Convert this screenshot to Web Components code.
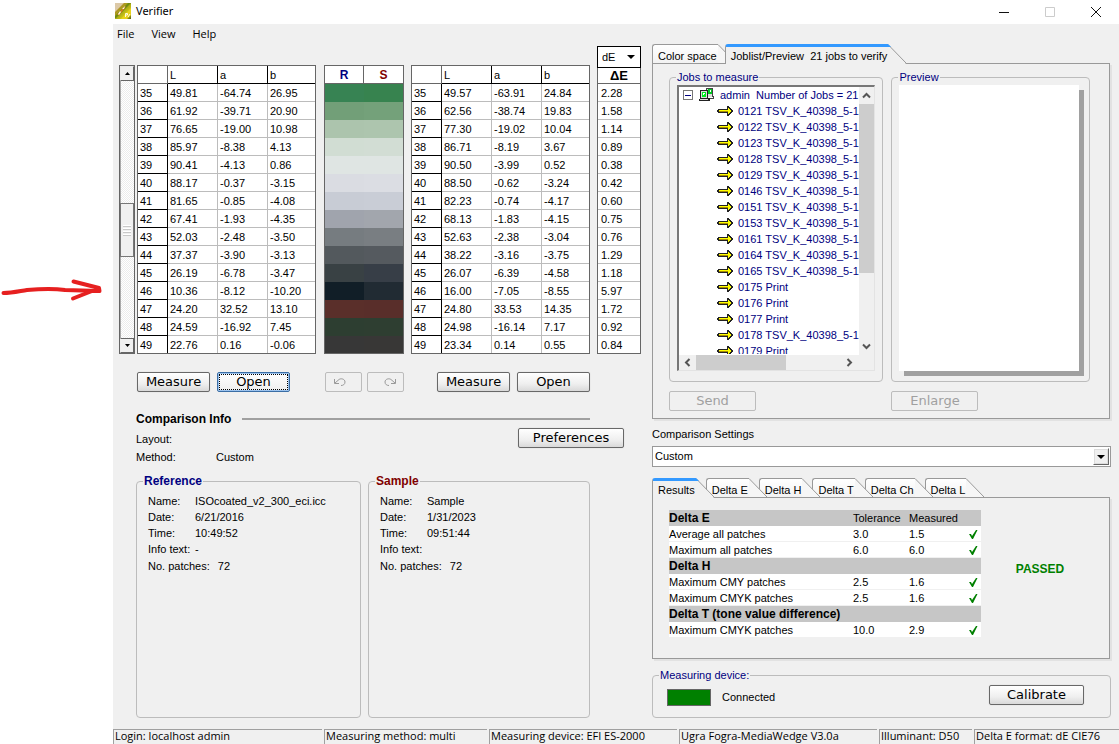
<!DOCTYPE html>
<html lang="en">
<head>
<meta charset="utf-8">
<title>Verifier</title>
<style>
  html, body { margin: 0; height: 100%; }
  body { background: #fff; font: 11px/16px "Liberation Sans", Arial, sans-serif; color: #000; }
</style>
</head>
<body>
<verifier-page></verifier-page>
<script>
const define = (name, css, html, setup) => customElements.define(name, class extends HTMLElement {
  connectedCallback() {
    if (this.shadowRoot) return;
    const root = this.attachShadow({ mode: 'open' });
    const body = typeof html === 'function' ? html(this) : html;
    root.innerHTML = `<style>*{box-sizing:border-box}${css}</style>${body}`;
    if (setup) setup(this, root);
  }
});

const reference = [
  [35,'49.81','-64.74','26.95'],[36,'61.92','-39.71','20.90'],[37,'76.65','-19.00','10.98'],
  [38,'85.97','-8.38','4.13'],[39,'90.41','-4.13','0.86'],[40,'88.17','-0.37','-3.15'],
  [41,'81.65','-0.85','-4.08'],[42,'67.41','-1.93','-4.35'],[43,'52.03','-2.48','-3.50'],
  [44,'37.37','-3.90','-3.13'],[45,'26.19','-6.78','-3.47'],[46,'10.36','-8.12','-10.20'],
  [47,'24.20','32.52','13.10'],[48,'24.59','-16.92','7.45'],[49,'22.76','0.16','-0.06']];
const sample = [
  [35,'49.57','-63.91','24.84'],[36,'62.56','-38.74','19.83'],[37,'77.30','-19.02','10.04'],
  [38,'86.71','-8.19','3.67'],[39,'90.50','-3.99','0.52'],[40,'88.50','-0.62','-3.24'],
  [41,'82.23','-0.74','-4.17'],[42,'68.13','-1.83','-4.15'],[43,'52.63','-2.38','-3.04'],
  [44,'38.22','-3.16','-3.75'],[45,'26.07','-6.39','-4.58'],[46,'16.00','-7.05','-8.55'],
  [47,'24.80','33.53','14.35'],[48,'24.98','-16.14','7.17'],[49,'23.34','0.14','0.55']];
const deltas = ['2.28','1.58','1.14','0.89','0.38','0.42','0.60','0.75','0.76','1.29','1.18','5.97','1.72','0.92','0.84'];
const swatches = [
  ['#378353','#37834f'],['#729f78','#74a17a'],['#acc4ad','#adc5ae'],['#d1ddd3','#d2ddd4'],['#dfe5e3','#dfe5e3'],
  ['#dadce2','#dbdde3'],['#c8ccd5','#c9cdd6'],['#a0a4ad','#a2a6ad'],['#767c80','#797e82'],['#53595d','#555a5f'],
  ['#394144','#373e47'],['#111e27','#212b33'],['#5a2f2a','#592e2a'],['#2d3e31','#2e3e31'],['#373737','#383736']];
const jobs = ['0121 TSV_K_40398_5-1','0122 TSV_K_40398_5-1','0123 TSV_K_40398_5-1','0128 TSV_K_40398_5-1',
  '0129 TSV_K_40398_5-1','0146 TSV_K_40398_5-1','0151 TSV_K_40398_5-1','0153 TSV_K_40398_5-1',
  '0161 TSV_K_40398_5-1','0164 TSV_K_40398_5-1','0165 TSV_K_40398_5-1','0175 Print','0176 Print','0177 Print',
  '0178 TSV_K_40398_5-1','0179 Print'];

define('red-arrow', `:host{display:block;padding-top:278px}svg{display:block}`,
  `<svg width="104" height="24" viewBox="0 0 104 24" fill="none" stroke="#e62020" stroke-width="4" stroke-linecap="round" stroke-linejoin="round" aria-hidden="true">
    <path d="M3.500 15C12 15 20 13 27 12C40 11 57 11 65 12L99 13"/><path d="M73.500 3.500L99 10L99.500 13L92 13L73 20.500"/></svg>`);

define('title-bar', `:host{display:flex;align-items:center;height:24px;background:#fff;font:12px/16px "Noto Sans","Open Sans",sans-serif}
  h1{font:inherit;margin:0 0 0 5px;flex:1;height:18px;font-size:11px}
  .logo{margin:-2px 0 0 2px}
  button{border:0;background:none;padding:0;width:46px;height:22px;display:grid;place-items:center;color:#111}
  button[disabled]{color:#ccc}`,
  `<svg class="logo" width="16" height="16" viewBox="0 0 16 16" aria-hidden="true"><defs><linearGradient id="g" x2="1" y2="1"><stop stop-color="#b87835"/><stop offset=".5" stop-color="#a8a818"/><stop offset=".75" stop-color="#dcd414"/><stop offset="1" stop-color="#565d12"/></linearGradient></defs>
    <path fill="url(#g)" d="M0 0H16V16H0Z"/><path fill="#dcc9a8" d="M0 0H9L0 9Z"/><path fill="#6f8a14" d="M0 13L13 0H16L1 15H0Z"/><path fill="#e8d21c" d="M6 16L16 5V12L12 16Z"/><path fill="#e87b25" d="M2 12L9 4L11 3L9 6L4 12Z"/><path fill="#fff7e8" d="M3 11L5 8L6 9L4 12ZM7 6L10 3L9 6Z"/><path fill="none" stroke="#fffbe0" d="M10.500 14V10.500H12.500V12H11M13 14L15 11"/></svg>
   <h1>Verifier</h1>
   <button aria-label="Minimize"><svg width="12" height="12" stroke="currentColor"><path d="M1 6.500H11"/></svg></button>
   <button aria-label="Maximize" disabled><svg width="12" height="12" stroke="currentColor" fill="none"><path d="M1.500 1.500H10.500V10.500H1.500Z"/></svg></button>
   <button aria-label="Close"><svg width="12" height="12" stroke="currentColor" fill="none"><path d="M1 1L11 11M11 1L1 11"/></svg></button>`);

define('menu-bar', `:host{display:flex;gap:17px;height:20px;padding-left:4px;font:11px/20px "Open Sans","Noto Sans",sans-serif}
  button{border:0;background:none;padding:0;font:inherit;color:inherit}`,
  `<button>File</button><button>View</button><button>Help</button>`);

define('status-bar', `:host{display:grid;grid-template-columns:209px 163px 188px 198px 93px 1fr;gap:2px;height:15px;font:11px/12px "Open Sans","Noto Sans",sans-serif}
  span{border:solid #a0a0a0;border-width:1px 0 0 1px;white-space:nowrap;padding-left:1px}
  span:first-child{border-left:0}`,
  ['Login: localhost admin','Measuring method: multi','Measuring device: EFI ES-2000','Ugra Fogra-MediaWedge V3.0a','Illuminant: D50','Delta E format: dE CIE76'].map(t => `<span>${t}</span>`).join(''));

define('push-button', `:host{display:block}
  button{display:flex;align-items:center;justify-content:center;width:100%;height:20px;padding:0 0 1px;border:1px solid #686868;border-radius:2px;
    background:linear-gradient(#fff,#efefef 60%,#d9d9d9);font:13px/16px "DejaVu Sans",Verdana,sans-serif;color:#000;box-shadow:0 0 1px #bbb}
  :host([focused]) button{border-color:#3b6ea5;background:linear-gradient(#fff,#efefef);box-shadow:inset 0 0 0 1px #9cc3ee;outline:1px dotted #000;outline-offset:-3px}
  button[disabled]{border-color:#bcbcbc;background:#f0f0f0;color:#a0a0a0;box-shadow:none}`,
  el => `<button ${el.hasAttribute('disabled') ? 'disabled' : ''} ${el.hasAttribute('label') ? `aria-label="${el.getAttribute('label')}"` : ''}><slot></slot></button>`);

define('group-box', `:host{display:flex}
  fieldset{flex:1;min-width:0;margin:0;padding:1px 7px 10px;border:1px solid #bcbcbc;border-radius:4px;display:block}
  legend{padding:0 1px;height:14px;line-height:14px;color:#000080;margin-left:-1px}
  :host([strong]) legend{font-weight:bold;font-size:12px}
  :host([red]) legend{color:#800000}`,
  el => `<fieldset><legend>${el.getAttribute('legend')}</legend><slot></slot></fieldset>`);

define('drop-down', `:host{display:block;position:relative}
  select{display:block;appearance:none;width:100%;height:21px;margin:0;padding:0 2px;border:1px solid #999;border-radius:0;background:#fff;color:#000;font:inherit;line-height:19px}
  :host([plain]) select{border-color:#000;height:22px;padding-left:4px}
  i{position:absolute;right:2px;top:2px;width:16px;height:17px;display:grid;place-items:center;background:#f0f0f0;border:1px solid;border-color:#fff #666 #666 #fff;box-shadow:0 0 0 1px #ddd inset;pointer-events:none}
  :host([plain]) i{background:none;border:0;box-shadow:none}`,
  el => `<select aria-label="${el.getAttribute('label')}"><option>${el.getAttribute('value')}</option></select><i><svg width="8" height="4"><path d="M0 0H8L4 4Z"/></svg></i>`);

define('classic-scroll', `:host{display:flex;flex-direction:column;border:1px solid #666;box-shadow:inset 1px 1px #aaa;background:repeating-conic-gradient(#fff 0 25%,#ececec 0 50%) 0 0/2px 2px}
  button{height:15px;border:1px solid #777;border-color:#eee #666 #666 #eee;background:#f0f0f0;padding:0;display:grid;place-items:center}
  .thumb{height:54px;margin-top:122px;border:1px solid #777;background:#f0f0f0;display:grid;place-content:center;gap:2px}
  .thumb i{width:8px;height:1px;background:#fff;box-shadow:0 1px #c8c8c8}
  .end{margin-top:auto;border-top-color:#666}`,
  `<button aria-label="Scroll up"><svg width="5" height="3"><path d="M0 3H5L2.500 0Z"/></svg></button>
   <div class="thumb"><i></i><i></i><i></i><i></i></div>
   <button class="end" aria-label="Scroll down"><svg width="5" height="3"><path d="M0 0H5L2.500 3Z"/></svg></button>`);

define('lab-table', `:host{display:block}
  table{width:100%;table-layout:fixed;border-collapse:separate;border-spacing:0;background:#fff;border:1px solid #666}
  col.n{width:30px}col.v{width:50px}
  th,td{height:18px;padding:0 0 0 2px;font-weight:normal;text-align:left;line-height:16px;border:solid #bcbcbc;border-width:0 1px 1px 0}
  thead th,tbody th{border-color:#000}
  thead th:first-child{border-right-color:#666;border-bottom-color:#666}
  tr>:last-child{border-right-width:0}
  tbody tr:last-child>*{height:17px;border-bottom-width:0}`,
  el => { const rows = el.hasAttribute('sample') ? sample : reference;
    return `<table><colgroup><col class="n"><col class="v"><col class="v"><col></colgroup>
    <thead><tr><th></th><th>L</th><th>a</th><th>b</th></tr></thead>
    <tbody>${rows.map(([n, ...v]) => `<tr><th scope="row">${n}</th>${v.map(x => `<td>${x}</td>`).join('')}</tr>`).join('')}</tbody></table>`; });

define('swatch-table', `:host{display:block}
  table{width:100%;table-layout:fixed;border-collapse:separate;border-spacing:0;border:1px solid #666}
  th{height:18px;padding:0;background:#fff;color:#800000;font-size:12px;line-height:16px;border-bottom:1px solid #666}
  th:first-child{color:#000080;border-right:1px solid #666}
  td{height:18px;padding:0}tr:last-child td{height:17px}`,
  `<table><thead><tr><th>R</th><th>S</th></tr></thead><tbody>${swatches.map(s => `<tr>${s.map(c => `<td style="background:${c}"></td>`).join('')}</tr>`).join('')}</tbody></table>`);

define('delta-table', `:host{display:block}
  table{width:100%;border-collapse:separate;border-spacing:0;background:#fff;border:solid #666;border-width:0 1px 1px}
  th{height:16px;padding:0;font-size:13px;line-height:15px;font-weight:bold;border-bottom:1px solid #666}
  td{height:18px;padding:1px 0 0 3px;line-height:16px;border-bottom:1px solid #bcbcbc}
  tr:last-child td{height:17px;border-bottom:0}`,
  `<drop-down plain label="Difference formula" value="dE"></drop-down>
   <table><thead><tr><th>ΔE</th></tr></thead><tbody>${deltas.map(d => `<tr><td>${d}</td></tr>`).join('')}</tbody></table>`);

define('info-list', `:host{display:block}
  dl{margin:0;padding:4px 4px 0;display:grid;grid-template-columns:47px 1fr}
  dt,dd{margin:0;white-space:nowrap;line-height:16px}
  .wide{grid-column:1/3;display:flex;gap:8px;padding-top:1px}`,
  el => { const [a, b, c, d, n] = el.getAttribute('values').split('|');
    return `<dl><dt>Name:</dt><dd>${a}</dd><dt>Date:</dt><dd>${b}</dd><dt>Time:</dt><dd>${c}</dd><dt>Info text:</dt><dd>${d}</dd><div class="wide"><dt>No. patches:</dt><dd>${n}</dd></div></dl>`; });

define('tab-panel', `:host{display:block}
  nav{display:flex;height:20px;margin-bottom:-1px;position:relative}
  button{display:flex;height:19px;border:0;padding:0;background:none;font:inherit;color:inherit;margin-right:var(--overlap,-8px);position:relative;white-space:nowrap}
  span{display:block;height:19px;padding:3px 1px 0 5px;line-height:16px;border:solid #999;border-width:1px 0 0 1px;border-radius:3px 0 0 0;background:linear-gradient(#fff,#f2f2f2)}
  svg{display:block}
  svg .f{fill:#f6f6f6}svg .l{stroke:#999;fill:none}
  .on{height:20px}.on span{height:20px;background:#f0f0f0;border-top:3px solid #3399ff;padding-top:1px}
  .on .f{fill:#f0f0f0}
  section{border:1px solid #999;box-shadow:2px 2px #e2e2e2;margin-right:1px}`,
  el => { const on = +el.getAttribute('active'), t = el.getAttribute('tabs').split('|');
    return `<nav role="tablist">${t.map((x, i) => `<button role="tab" aria-selected="${i === on}" class="${i === on ? 'on' : ''}" style="z-index:${i === on ? 20 : 10 - i}"><span>${x}</span><svg width="18" height="20"><path class="f" d="M0 0L18 ${i === on ? 20 : 19}H0Z"/><path class="l" d="M0 .5L18 19"/>${i === on ? '<path fill="#3399ff" d="M0 0L3 3H0Z"/>' : ''}</svg></button>`).join('')}</nav><section role="tabpanel"><slot></slot></section>`; });

const jobArrow = `<svg width="17" height="12" viewBox="0 0 17 12" shape-rendering="crispEdges"><path fill="#222" d="M1 4H10V1H12V2H13V3H14V4H15V5H16V7H15V8H14V9H13V10H12V11H10V8H1V7H0V5H1Z"/><path fill="#ff0" d="M2 5H11V3H12V4H13V5H14V7H13V8H12V9H11V7H2Z"/><path fill="#a88a00" d="M2 6H11V7H2Z"/></svg>`;
const hosts = `<svg width="16" height="16" viewBox="0 0 16 16" shape-rendering="crispEdges"><path fill="#444" d="M7 1H14V9H15V12H7Z"/><path fill="#ddd" d="M8 2H13V10H8Z"/><path fill="#0c2" d="M9 2H13V7H9Z"/><path fill="#fff" d="M11 3H12V5H11ZM9 10H14V11H9Z"/><path fill="#222" d="M1 3H9V11H11V14H0V12H1Z"/><path fill="#ddd" d="M2 4H8V11H2ZM1 12H9V13H1Z"/><path fill="#0e2" d="M3 5H7V10H3Z"/><path fill="#fff" d="M4 6H6V7H5V8H4Z"/></svg>`;
const chev = d => `<svg width="9" height="9" fill="none" stroke="#555" stroke-width="2"><path d="${d}"/></svg>`;

define('job-tree', `:host{display:grid;grid-template:268px 15px/minmax(0,1fr) 15px;border:solid;border-width:2px 1px 1px 2px;border-color:#777 #e3e3e3 #e3e3e3 #777;background:#fff;color:#000080}
  ul{margin:0;padding:0;list-style:none}
  .view{overflow:hidden;height:267px}
  li div{display:flex;align-items:center;height:16px;white-space:pre}
  .root{padding-left:4px;gap:5px}
  .root button{width:10px;height:10px;margin-right:1px;padding:0;border:1px solid #777;background:linear-gradient(#000080,#000080) center/6px 1px no-repeat #fff}
  li li div{padding-left:38px;gap:4px}
  .v{background:linear-gradient(#f0f0f0,#f0f0f0) 0 0/15px 17px no-repeat,linear-gradient(#cdcdcd,#cdcdcd) 0 17px/15px 169px no-repeat,#f0f0f0;display:flex;flex-direction:column;justify-content:space-between}
  .v button,.h button{border:0;background:none;padding:0;width:17px;height:17px;display:grid;place-items:center}
  .v button{width:15px}.h button{height:15px}
  .h{grid-column:1/3;background:linear-gradient(#cdcdcd,#cdcdcd) 17px 0/90px 15px no-repeat,#f0f0f0;display:flex;justify-content:space-between;padding-right:16px}`,
  `<div class="view"><ul><li><div class="root"><button aria-label="Collapse"></button>${hosts}<span>admin  Number of Jobs = 21</span></div>
   <ul>${jobs.map(j => `<li><div>${jobArrow}<span>${j}</span></div></li>`).join('')}</ul></li></ul></div>
   <div class="v"><button aria-label="Up">${chev('M1 6.500L4.500 3L8 6.500')}</button><button aria-label="Down">${chev('M1 2.500L4.500 6L8 2.500')}</button></div>
   <div class="h"><button aria-label="Left">${chev('M6.500 1L3 4.500L6.500 8')}</button><button aria-label="Right">${chev('M2.500 1L6 4.500L2.500 8')}</button></div>`);

const tick = `<svg width="10" height="9" viewBox="0 0 10 9" role="img" aria-label="ok"><path d="M1 4H3L4 6L8 0H9.500L5 9H4Z" fill="#008000"/></svg>`;
define('results-table', `:host{display:block}
  table{width:100%;table-layout:fixed;border-collapse:separate;border-spacing:0}
  th,td{height:16px;padding:2px 0 0;line-height:13px;text-align:left;white-space:nowrap;font-weight:normal;background:#fff;border-bottom:1px solid #f0f0f0}
  .head>*{background:#c6c6c6;border-color:#c6c6c6}
  .head>:first-child{font-size:12px;font-weight:bold}
  col.a{width:184px}col.b{width:56px}td svg{display:block;margin-left:3px}`,
  (() => { const h = (n, a = '', b = '') => a ? `<tr class="head"><th>${n}</th><th>${a}</th><th>${b}</th><th></th></tr>` : `<tr class="head"><th colspan="4">${n}</th></tr>`;
    const r = (n, a, b) => `<tr><th scope="row">${n}</th><td>${a}</td><td>${b}</td><td>${tick}</td></tr>`;
    return `<table><colgroup><col class="a"><col class="b"><col class="b"><col></colgroup><tbody>${h('Delta E','Tolerance','Measured')}${r('Average all patches','3.0','1.5')}${r('Maximum all patches','6.0','6.0')}${h('Delta H')}${r('Maximum CMY patches','2.5','1.6')}${r('Maximum CMYK patches','2.5','1.6')}${h('Delta T (tone value difference)')}${r('Maximum CMYK patches','10.0','2.9')}</tbody></table>`; })());

define('measure-column', `:host{display:flex;flex-direction:column;padding-top:2px}
  .tables{display:grid;grid-template-columns:198px 80px 179px 44px;align-items:end;column-gap:7px}
  classic-scroll{height:289px}
  .lead{display:flex;gap:2px}.lead lab-table{width:179px}.lead classic-scroll{width:16px}
  .actions{display:flex;margin:18px 0 0 18px;gap:7px}
  .w{width:73px}.s{width:37px}.gap{margin-left:28px}.actions .s+.s{margin-left:-2px}.actions .r{margin-left:26px}
  .info{display:grid;grid-template-columns:80px 1fr 106px;margin:19px 17px 0 17px;align-items:end;line-height:18px}
  h2{grid-column:1/4;margin:0 34px 1px 0;font:bold 12px/16px "Liberation Sans",Arial,sans-serif;display:flex;align-items:center;gap:11px;height:16px}
  h2::after{content:"";flex:1;height:2px;background:#a0a0a0}
  .info push-button{grid-area:2/3}
  .info span{height:18px}
  .layout{grid-column:1/3}
  .boxes{display:grid;grid-template-columns:225px 222px;gap:7px;margin:8px 0 0 17px;flex:1}`,
  `<div class="tables"><div class="lead"><classic-scroll></classic-scroll><lab-table></lab-table></div><swatch-table></swatch-table><lab-table sample></lab-table><delta-table></delta-table></div>
   <div class="actions"><push-button class="w">Measure</push-button><push-button class="w" focused>Open</push-button>
    <push-button class="s gap" disabled label="Undo"><svg width="22" height="10" fill="none" stroke="#999"><path d="M1.500 2V6.500H6M2 6L6 2.500C8 1 12 2 12 5C12 7.500 10 8.500 8 8.500"/></svg></push-button>
    <push-button class="s" disabled label="Redo"><svg width="22" height="10" fill="none" stroke="#999"><path d="M20.500 2V6.500H16M20 6L16 2.500C14 1 10 2 10 5C10 7.500 12 8.500 14 8.500"/></svg></push-button>
    <push-button class="w r">Measure</push-button><push-button class="w">Open</push-button></div>
   <div class="info"><h2>Comparison Info</h2><span class="layout">Layout:</span><push-button>Preferences</push-button><span>Method:</span><span>Custom</span></div>
   <div class="boxes"><group-box strong legend="Reference"><info-list values="ISOcoated_v2_300_eci.icc|6/21/2016|10:49:52|-|72"></info-list></group-box>
    <group-box strong red legend="Sample"><info-list values="Sample|1/31/2023|09:51:44||72"></info-list></group-box></div>`);

define('review-column', `:host{display:flex;flex-direction:column;flex:1;min-width:0}
  .jobs{display:grid;grid-template-columns:215fr 199fr;column-gap:8px;row-gap:9px;padding:6px 19px 7px 16px}
  .main{--overlap:-11px}
  .paper{height:286px;margin:0 3px 0 0;background:#fff;box-shadow:5px 5px #a0a0a0}
  push-button.b{width:87px}
  .label{display:block;margin-top:7px;height:20px;line-height:16px}
  .results{display:flex;padding:12px 0 20px 16px;align-items:center}
  results-table{width:312px}
  strong{flex:1;text-align:center;color:#008000;font-size:12px;padding-right:10px;margin-top:-10px}
  .second{margin-top:11px}
  .device{margin-top:9px;flex:1}
  .row{display:flex;align-items:center;gap:11px;padding:4px 19px 0 7px;height:24px;box-sizing:border-box}
  .lamp{width:44px;height:17px;border:1px solid #666;background:#008000}
  .row push-button{width:95px;margin:-4px 0 0 auto}`,
  `<tab-panel class="main" tabs="Color space|Joblist/Preview&nbsp; 21 jobs to verify" active="1"><div class="jobs">
     <group-box legend="Jobs to measure"><job-tree></job-tree></group-box>
     <group-box legend="Preview"><div class="paper"></div></group-box>
     <push-button class="b" disabled>Send</push-button><push-button class="b" disabled>Enlarge</push-button></div></tab-panel>
   <span class="label">Comparison Settings</span><drop-down label="Comparison Settings" value="Custom"></drop-down>
   <tab-panel class="second" tabs="Results|Delta E|Delta H|Delta T|Delta Ch|Delta L" active="0"><div class="results"><results-table></results-table><strong>PASSED</strong></div></tab-panel>
   <group-box class="device" legend="Measuring device:"><div class="row"><div class="lamp"></div><span>Connected</span><push-button>Calibrate</push-button></div></group-box>`);

define('app-window', `:host{display:flex;flex-direction:column;background:#f0f0f0;min-width:0}
  main{flex:1;display:flex;gap:11px;padding:0 8px 11px 6px}`,
  `<title-bar></title-bar><menu-bar></menu-bar><main><measure-column></measure-column><review-column></review-column></main><status-bar></status-bar>`);

define('verifier-page', `:host{display:grid;grid-template-columns:113px minmax(0,1fr);min-height:100vh}`,
  `<red-arrow></red-arrow><app-window></app-window>`);
</script>
</body>
</html>
